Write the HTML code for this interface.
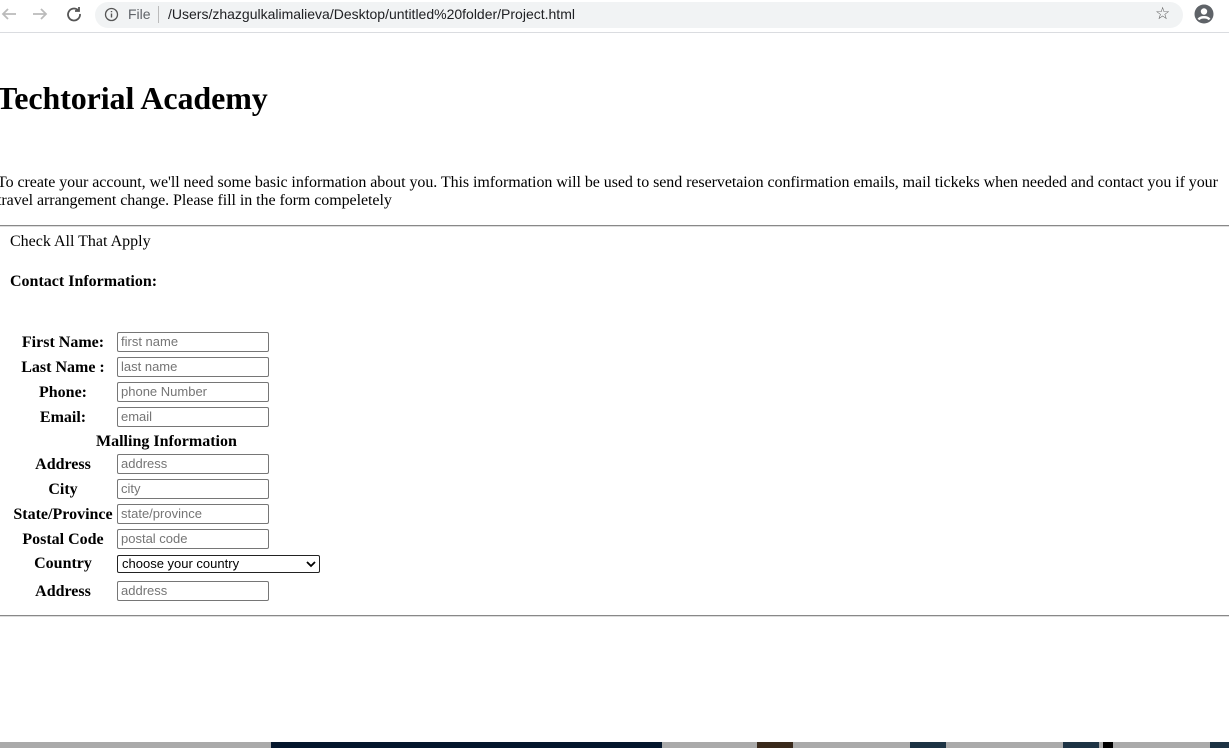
<!DOCTYPE html>
<html><head><style>
body{margin:0;width:1229px;height:748px;overflow:hidden;background:#fff;position:relative;font-family:"Liberation Serif",serif;color:#000}
.a{position:absolute;white-space:nowrap}
.lbl{position:absolute;width:108px;left:9px;text-align:center;font-weight:bold;font-size:16px;line-height:20px;margin-top:1px}
.in{position:absolute;left:117px;width:147px;height:18px;border:1px solid #767676;border-radius:2px;font:13px "Liberation Sans",sans-serif;color:#757575;line-height:18px;padding-left:3px;box-sizing:content-box}
</style></head><body>
<div class="a" style="left:0;top:0;width:1229px;height:32px;background:#fff;border-bottom:1px solid #dadce0"></div>
<div class="a" style="left:95px;top:2px;width:1088px;height:26px;background:#f1f3f4;border-radius:13px"></div>
<svg class="a" style="left:0;top:5px" width="90" height="20" viewBox="0 0 90 20" fill="none" stroke-width="1.8">
<path d="M16 9H3M8 4L3 9l5 5" stroke="#bbb"/>
<path d="M33 9h13M41 4l5 5-5 5" stroke="#bbb"/>
<path d="M78 5a6 6 0 1 0 2 4M79 2v4h-4" stroke="#555"/>
</svg>
<svg class="a" style="left:104px;top:7px" width="15" height="15" viewBox="0 0 15 15"><circle cx="7.5" cy="7.5" r="6" fill="none" stroke="#555" stroke-width="1.3"/><path d="M7.5 6.5v4M7.5 4v1.3" stroke="#555" stroke-width="1.4"/></svg>
<div class="a" style="left:128px;top:6px;font:14px 'Liberation Sans',sans-serif;color:#5f6368">File</div>
<div class="a" style="left:158px;top:6px;width:1px;height:17px;background:#bbb"></div>
<div class="a" style="left:168px;top:6px;font:14px 'Liberation Sans',sans-serif;color:#202124">/Users/zhazgulkalimalieva/Desktop/untitled%20folder/Project.html</div>
<div class="a" style="left:1155px;top:4px;font:17px 'DejaVu Sans',sans-serif;color:#555">☆</div>
<svg class="a" style="left:1194px;top:4px" width="20" height="20" viewBox="0 0 20 20"><circle cx="10" cy="10" r="9.5" fill="#5f6368"/><circle cx="10" cy="7.5" r="3.2" fill="#fff"/><path d="M4.5 15.5c2-3 9-3 11 0" stroke="#fff" stroke-width="2.4" fill="none"/></svg>

<div class="a" style="left:-4px;top:80px;font-size:32px;font-weight:bold;letter-spacing:-0.1px">Techtorial Academy</div>
<div class="a" style="left:-3px;top:174px;font-size:16px;line-height:18px;letter-spacing:-0.06px">To create your account, we'll need some basic information about you. This imformation will be used to send reservetaion confirmation emails, mail tickeks when needed and contact you if your<br>travel arrangement change. Please fill in the form compeletely</div>
<div class="a" style="left:0;top:225px;width:1229px;height:0;border-top:1px solid #888;border-bottom:1px solid #ddd"></div>
<div class="a" style="left:10px;top:233px;font-size:16px">Check All That Apply</div>
<div class="a" style="left:10px;top:273px;font-size:16px;font-weight:bold">Contact Information:</div>

<div class="lbl" style="top:332px">First Name:</div><div class="in" style="top:332px">first name</div>
<div class="lbl" style="top:357px">Last Name :</div><div class="in" style="top:357px">last name</div>
<div class="lbl" style="top:382px">Phone:</div><div class="in" style="top:382px">phone Number</div>
<div class="lbl" style="top:407px">Email:</div><div class="in" style="top:407px">email</div>
<div class="a" style="left:96px;top:432px;font-size:16px;font-weight:bold;line-height:20px">Malling Information</div>
<div class="lbl" style="top:454px">Address</div><div class="in" style="top:454px">address</div>
<div class="lbl" style="top:479px">City</div><div class="in" style="top:479px">city</div>
<div class="lbl" style="top:504px;left:7px;width:112px">State/Province</div><div class="in" style="top:504px">state/province</div>
<div class="lbl" style="top:529px">Postal Code</div><div class="in" style="top:529px">postal code</div>
<div class="lbl" style="top:553px">Country</div>
<div class="a" style="left:117px;top:555px;width:203px;border:1px solid #222;border-radius:2px;font:13px 'Liberation Sans',sans-serif;line-height:16px;padding-left:4px;box-sizing:border-box;height:18px">choose your country</div>
<svg class="a" style="left:306px;top:560px" width="10" height="8" viewBox="0 0 10 8"><path d="M1 2l4 4 4-4" stroke="#000" stroke-width="1.8" fill="none"/></svg>
<div class="lbl" style="top:581px">Address</div><div class="in" style="top:581px">address</div>
<div class="a" style="left:0;top:615px;width:1229px;height:0;border-top:1px solid #888;border-bottom:1px solid #ddd"></div>

<div class="a" style="left:0;top:742px;width:1229px;height:6px;background:#aaa"></div>
<div class="a" style="left:271px;top:742px;width:391px;height:6px;background:#04162c"></div>
<div class="a" style="left:757px;top:742px;width:36px;height:6px;background:#3a2a1c"></div>
<div class="a" style="left:910px;top:742px;width:36px;height:6px;background:#1d3344"></div>
<div class="a" style="left:1063px;top:742px;width:36px;height:6px;background:#1d3344"></div>
<div class="a" style="left:1103px;top:742px;width:10px;height:6px;background:#000"></div>
<div class="a" style="left:1210px;top:742px;width:19px;height:6px;background:#1d3344"></div>
</body></html>
